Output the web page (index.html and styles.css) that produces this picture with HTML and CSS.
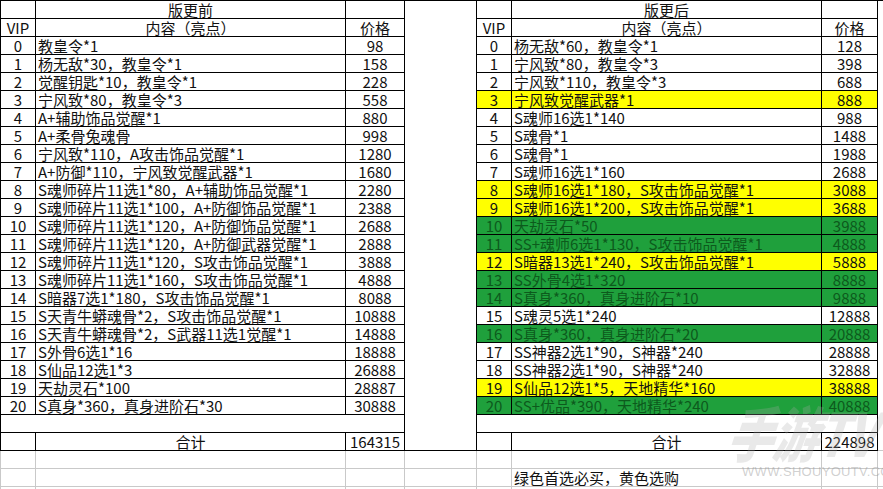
FILE: index.html
```html
<!DOCTYPE html>
<html lang="zh-CN">
<head>
<meta charset="utf-8">
<title>版更前 / 版更后</title>
<link rel="stylesheet" href="styles.css">
</head>
<body>
<div class="sheet">
<table class="grid">
<colgroup>
<col class="c-a"><col class="c-b"><col class="c-c"><col class="c-d"><col class="c-e"><col class="c-f"><col class="c-g"><col class="c-h">
</colgroup>
<tbody>
<tr><td class="b"></td><td class="b ctr">版更前</td><td class="b"></td><td class="gap top"></td><td class="b"></td><td class="b ctr">版更后</td><td class="b"></td><td class="gap top"></td></tr>
<tr><td class="b ctr">VIP</td><td class="b ctr">内容（亮点）</td><td class="b ctr">价格</td><td class="gap"></td><td class="b ctr">VIP</td><td class="b ctr">内容（亮点）</td><td class="b ctr">价格</td><td class="gap"></td></tr>
<tr><td class="b ctr">0</td><td class="b txt">教皇令*1</td><td class="b ctr">98</td><td class="gap"></td><td class="b ctr">0</td><td class="b txt">杨无敌*60，教皇令*1</td><td class="b ctr">128</td><td class="gap"></td></tr>
<tr><td class="b ctr">1</td><td class="b txt">杨无敌*30，教皇令*1</td><td class="b ctr">158</td><td class="gap"></td><td class="b ctr">1</td><td class="b txt">宁风致*80，教皇令*3</td><td class="b ctr">398</td><td class="gap"></td></tr>
<tr><td class="b ctr">2</td><td class="b txt">觉醒钥匙*10，教皇令*1</td><td class="b ctr">228</td><td class="gap"></td><td class="b ctr">2</td><td class="b txt">宁风致*110，教皇令*3</td><td class="b ctr">688</td><td class="gap"></td></tr>
<tr><td class="b ctr">3</td><td class="b txt">宁风致*80，教皇令*3</td><td class="b ctr">558</td><td class="gap"></td><td class="b ctr y">3</td><td class="b txt y">宁风致觉醒武器*1</td><td class="b ctr y">888</td><td class="gap"></td></tr>
<tr><td class="b ctr">4</td><td class="b txt">A+辅助饰品觉醒*1</td><td class="b ctr">880</td><td class="gap"></td><td class="b ctr">4</td><td class="b txt">S魂师16选1*140</td><td class="b ctr">988</td><td class="gap"></td></tr>
<tr><td class="b ctr">5</td><td class="b txt">A+柔骨兔魂骨</td><td class="b ctr">998</td><td class="gap"></td><td class="b ctr">5</td><td class="b txt">S魂骨*1</td><td class="b ctr">1488</td><td class="gap"></td></tr>
<tr><td class="b ctr">6</td><td class="b txt">宁风致*110，A攻击饰品觉醒*1</td><td class="b ctr">1280</td><td class="gap"></td><td class="b ctr">6</td><td class="b txt">S魂骨*1</td><td class="b ctr">1988</td><td class="gap"></td></tr>
<tr><td class="b ctr">7</td><td class="b txt">A+防御*110，宁风致觉醒武器*1</td><td class="b ctr">1680</td><td class="gap"></td><td class="b ctr">7</td><td class="b txt">S魂师16选1*160</td><td class="b ctr">2688</td><td class="gap"></td></tr>
<tr><td class="b ctr">8</td><td class="b txt">S魂师碎片11选1*80，A+辅助饰品觉醒*1</td><td class="b ctr">2280</td><td class="gap"></td><td class="b ctr y">8</td><td class="b txt y">S魂师16选1*180，S攻击饰品觉醒*1</td><td class="b ctr y">3088</td><td class="gap"></td></tr>
<tr><td class="b ctr">9</td><td class="b txt">S魂师碎片11选1*100，A+防御饰品觉醒*1</td><td class="b ctr">2388</td><td class="gap"></td><td class="b ctr y">9</td><td class="b txt y">S魂师16选1*200，S攻击饰品觉醒*1</td><td class="b ctr y">3688</td><td class="gap"></td></tr>
<tr><td class="b ctr">10</td><td class="b txt">S魂师碎片11选1*120，A+防御饰品觉醒*1</td><td class="b ctr">2688</td><td class="gap"></td><td class="b ctr gr">10</td><td class="b txt gr">天劫灵石*50</td><td class="b ctr gr">3988</td><td class="gap"></td></tr>
<tr><td class="b ctr">11</td><td class="b txt">S魂师碎片11选1*120，A+防御武器觉醒*1</td><td class="b ctr">2888</td><td class="gap"></td><td class="b ctr gr">11</td><td class="b txt gr">SS+魂师6选1*130，S攻击饰品觉醒*1</td><td class="b ctr gr">4888</td><td class="gap"></td></tr>
<tr><td class="b ctr">12</td><td class="b txt">S魂师碎片11选1*120，S攻击饰品觉醒*1</td><td class="b ctr">3888</td><td class="gap"></td><td class="b ctr y">12</td><td class="b txt y">S暗器13选1*240，S攻击饰品觉醒*1</td><td class="b ctr y">5888</td><td class="gap"></td></tr>
<tr><td class="b ctr">13</td><td class="b txt">S魂师碎片11选1*160，S攻击饰品觉醒*1</td><td class="b ctr">4888</td><td class="gap"></td><td class="b ctr gr">13</td><td class="b txt gr">SS外骨4选1*320</td><td class="b ctr gr">8888</td><td class="gap"></td></tr>
<tr><td class="b ctr">14</td><td class="b txt">S暗器7选1*180，S攻击饰品觉醒*1</td><td class="b ctr">8088</td><td class="gap"></td><td class="b ctr gr">14</td><td class="b txt gr">S真身*360，真身进阶石*10</td><td class="b ctr gr">9888</td><td class="gap"></td></tr>
<tr><td class="b ctr">15</td><td class="b txt">S天青牛蟒魂骨*2，S攻击饰品觉醒*1</td><td class="b ctr">10888</td><td class="gap"></td><td class="b ctr">15</td><td class="b txt">S魂灵5选1*240</td><td class="b ctr">12888</td><td class="gap"></td></tr>
<tr><td class="b ctr">16</td><td class="b txt">S天青牛蟒魂骨*2，S武器11选1觉醒*1</td><td class="b ctr">14888</td><td class="gap"></td><td class="b ctr gr">16</td><td class="b txt gr">S真身*360，真身进阶石*20</td><td class="b ctr gr">20888</td><td class="gap"></td></tr>
<tr><td class="b ctr">17</td><td class="b txt">S外骨6选1*16</td><td class="b ctr">18888</td><td class="gap"></td><td class="b ctr">17</td><td class="b txt">SS神器2选1*90，S神器*240</td><td class="b ctr">28888</td><td class="gap"></td></tr>
<tr><td class="b ctr">18</td><td class="b txt">S仙品12选1*3</td><td class="b ctr">26888</td><td class="gap"></td><td class="b ctr">18</td><td class="b txt">SS神器2选1*90，S神器*240</td><td class="b ctr">32888</td><td class="gap"></td></tr>
<tr><td class="b ctr">19</td><td class="b txt">天劫灵石*100</td><td class="b ctr">28887</td><td class="gap"></td><td class="b ctr y">19</td><td class="b txt y">S仙品12选1*5，天地精华*160</td><td class="b ctr y">38888</td><td class="gap"></td></tr>
<tr><td class="b ctr">20</td><td class="b txt">S真身*360，真身进阶石*30</td><td class="b ctr">30888</td><td class="gap"></td><td class="b ctr gr">20</td><td class="b txt gr">SS+优品*390，天地精华*240</td><td class="b ctr gr">40888</td><td class="gap"></td></tr>
<tr><td class="b" colspan="3"></td><td class="gap"></td><td class="b" colspan="3"></td><td class="gap"></td></tr>
<tr><td class="b"></td><td class="b ctr">合计</td><td class="b ctr">164315</td><td class="gap bot"></td><td class="b"></td><td class="b ctr">合计</td><td class="b ctr">224898</td><td class="gap"></td></tr>
<tr><td class="g"></td><td class="g"></td><td class="g"></td><td class="g"></td><td class="g"></td><td class="g"></td><td class="g"></td><td class="g"></td></tr>
<tr><td class="g"></td><td class="g"></td><td class="g"></td><td class="g"></td><td class="g"></td><td class="g txt">绿色首选必买，黄色选购</td><td class="g"></td><td class="g"></td></tr>
<tr><td class="g"></td><td class="g"></td><td class="g"></td><td class="g"></td><td class="g"></td><td class="g"></td><td class="g"></td><td class="g"></td></tr>
</tbody>
</table>
<div class="mark">
<span class="mark-big">手游TV</span>
<span class="mark-url">WWW.SHOUYOUTV.COM</span>
</div>
</div>
</body>
</html>
```
FILE: styles.css
```css
html, body {
  margin: 0;
  padding: 0;
  background: #ffffff;
  overflow: hidden;
}
.sheet {
  position: relative;
  width: 883px;
  height: 489px;
  overflow: hidden;
  font-family: "Noto Sans CJK SC", "Noto Sans", sans-serif;
  font-size: 15px;
  color: #111111;
}
.grid {
  border-collapse: collapse;
  table-layout: fixed;
  width: 884px;
}
.c-a { width: 35px; }
.c-b { width: 310px; }
.c-c { width: 59px; }
.c-d { width: 72px; }
.c-e { width: 35px; }
.c-f { width: 310px; }
.c-g { width: 56px; }
.c-h { width: 7px; }
.grid td {
  height: 17px;
  padding: 0;
  line-height: 17px;
  white-space: nowrap;
  overflow: hidden;
  vertical-align: middle;
}
.b { border: 1px solid #000000; }
.g { border: 1px solid #c9c9c9; }
.gap { border: none; }
.gap.top { border-top: 1px solid #000000; }
.gap.bot { border-bottom: 1px solid #000000; }
.ctr { text-align: center; }
.txt { text-align: left; padding-left: 2px !important; }
.y { background: #ffff00; }
.gr { background: #1fa03c; color: #0d5a1c; }
.mark {
  position: absolute;
  left: 734px;
  top: 398px;
  width: 148px;
  display: flex;
  flex-direction: column;
  align-items: flex-start;
  pointer-events: none;
}
.mark-big {
  font-family: "Noto Sans CJK SC", "DejaVu Sans", sans-serif;
  font-weight: 900;
  font-style: italic;
  font-size: 46px;
  line-height: 50px;
  height: 66px;
  color: rgba(170, 170, 170, 0.26);
  letter-spacing: -1px;
  white-space: nowrap;
  transform: scaleY(1.3) skewX(-10deg);
  transform-origin: left top;
}
.mark-url {
  font-family: "Liberation Sans", Arial, sans-serif;
  font-size: 13px;
  line-height: 16px;
  margin-left: 8px;
  color: rgba(150, 150, 150, 0.45);
  letter-spacing: 0.3px;
  white-space: nowrap;
}
```
